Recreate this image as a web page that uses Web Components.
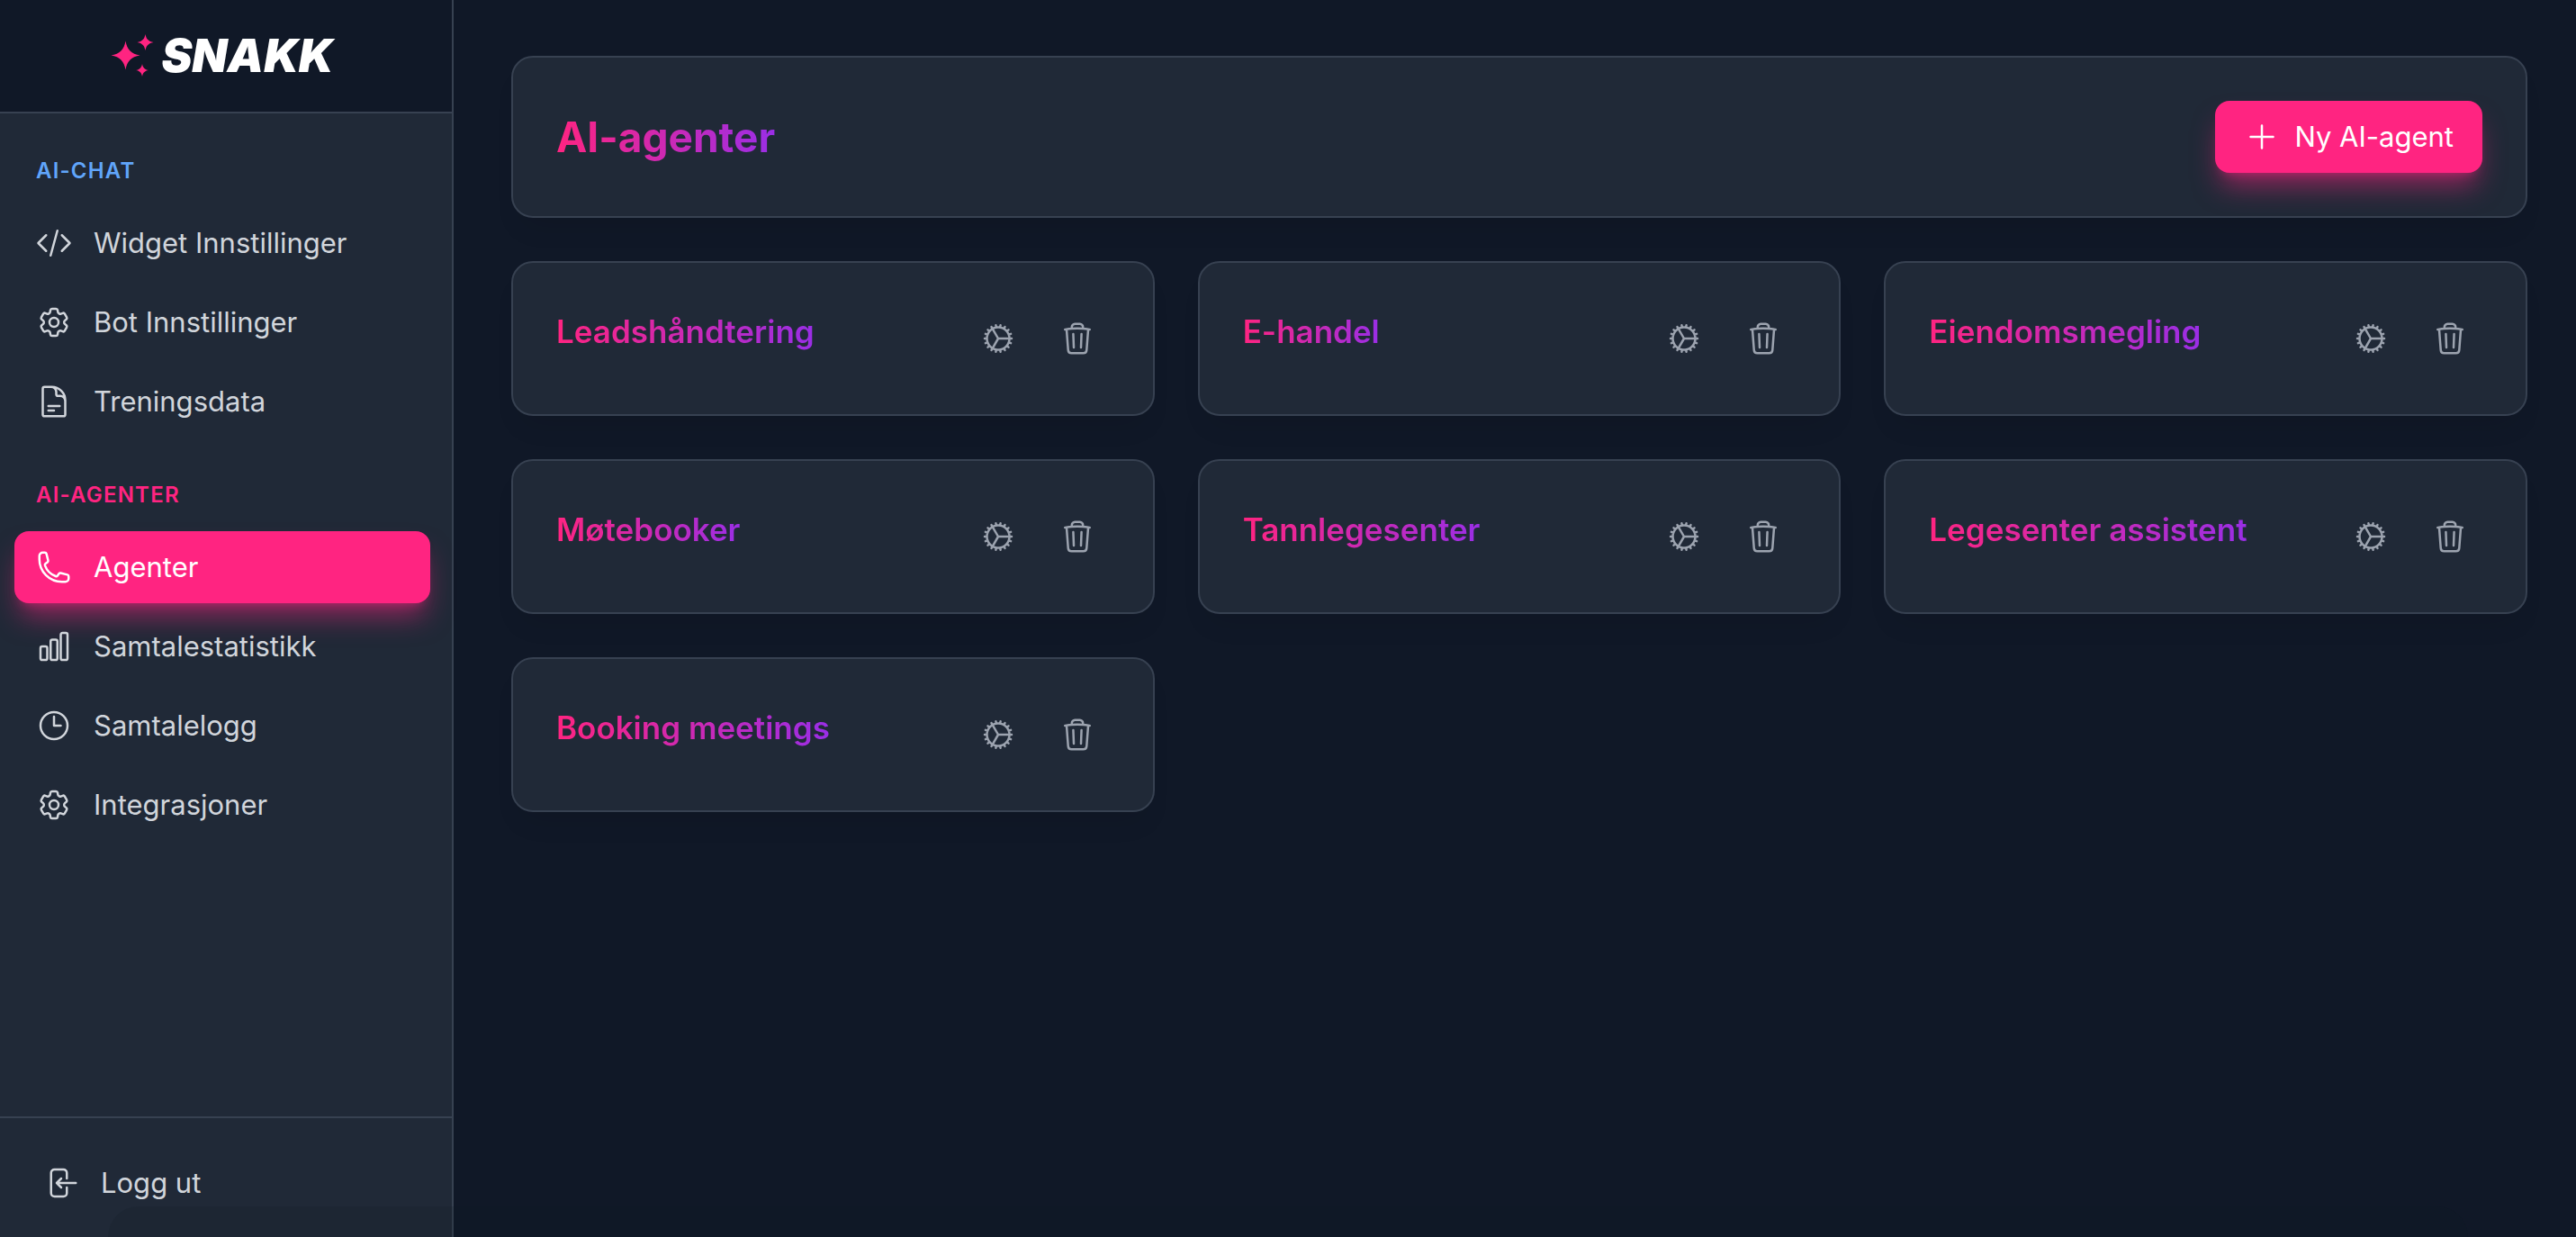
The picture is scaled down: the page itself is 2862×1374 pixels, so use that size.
<!DOCTYPE html>
<html lang="no">
<head>
<meta charset="utf-8">
<title>Snakk – AI-agenter</title>
<style>
  :root {
    --bg: #101827;
    --panel: #202937;
    --line: #374151;
    --pink: #ff2481;
    --purple: #9a2ee6;
    --blue: #60a5fa;
    --text: #d1d5db;
    --muted: #9ca3af;
    --glow: 0 20px 30px -6px rgb(255 36 129 / 0.5), 0 8px 12px -8px rgb(255 36 129 / 0.5);
    --shade: 0 20px 30px -12px rgb(0 0 0 / 0.1);
  }
  body {
    margin: 0;
    background: var(--bg);
    color: var(--text);
    font-family: Inter, "Liberation Sans", sans-serif;
    font-size: 31px;
    line-height: 48px;
  }
</style>
</head>
<body>

<app-shell>
  <side-bar slot="sidebar">
    <snakk-logo slot="logo"></snakk-logo>
    <nav-section label="AI-chat" tone="blue">
      <nav-item icon="code">Widget Innstillinger</nav-item>
      <nav-item icon="cog-tooth">Bot Innstillinger</nav-item>
      <nav-item icon="document">Treningsdata</nav-item>
    </nav-section>
    <nav-section label="AI-agenter" tone="pink">
      <nav-item icon="phone" active>Agenter</nav-item>
      <nav-item icon="chart">Samtalestatistikk</nav-item>
      <nav-item icon="clock">Samtalelogg</nav-item>
      <nav-item icon="cog-tooth">Integrasjoner</nav-item>
    </nav-section>
    <logout-button slot="footer">Logg ut</logout-button>
  </side-bar>

  <page-header>
    AI-agenter
    <primary-button slot="action" icon="plus">Ny AI-agent</primary-button>
  </page-header>

  <agent-grid>
    <agent-card>Leadshåndtering</agent-card>
    <agent-card>E-handel</agent-card>
    <agent-card>Eiendomsmegling</agent-card>
    <agent-card>Møtebooker</agent-card>
    <agent-card>Tannlegesenter</agent-card>
    <agent-card>Legesenter assistent</agent-card>
    <agent-card>Booking meetings</agent-card>
  </agent-grid>
</app-shell>

<script>
const ICONS = {
  "code": "M17.25 6.75 22.5 12l-5.25 5.25m-10.5 0L1.5 12l5.25-5.25m7.5-3-4.5 16.5",
  "cog-tooth": "M9.594 3.94c.09-.542.56-.94 1.11-.94h2.593c.55 0 1.02.398 1.11.94l.213 1.281c.063.374.313.686.645.87.074.04.147.083.22.127.325.196.72.257 1.075.124l1.217-.456a1.125 1.125 0 0 1 1.37.49l1.296 2.247a1.125 1.125 0 0 1-.26 1.431l-1.003.827c-.293.241-.438.613-.43.992a7.723 7.723 0 0 1 0 .255c-.008.378.137.75.43.991l1.004.827c.424.35.534.955.26 1.43l-1.298 2.247a1.125 1.125 0 0 1-1.369.491l-1.217-.456c-.355-.133-.75-.072-1.076.124a6.47 6.47 0 0 1-.22.128c-.331.183-.581.495-.644.869l-.213 1.281c-.09.543-.56.94-1.11.94h-2.594c-.55 0-1.019-.398-1.11-.94l-.213-1.281c-.062-.374-.312-.686-.644-.87a6.52 6.52 0 0 1-.22-.127c-.325-.196-.72-.257-1.076-.124l-1.217.456a1.125 1.125 0 0 1-1.369-.49l-1.297-2.247a1.125 1.125 0 0 1 .26-1.431l1.004-.827c.292-.24.437-.613.43-.991a6.932 6.932 0 0 1 0-.255c.007-.38-.138-.751-.43-.992l-1.004-.827a1.125 1.125 0 0 1-.26-1.43l1.297-2.247a1.125 1.125 0 0 1 1.37-.491l1.216.456c.356.133.751.072 1.076-.124.072-.044.146-.086.22-.128.332-.183.582-.495.644-.869l.214-1.28ZM15 12a3 3 0 1 1-6 0 3 3 0 0 1 6 0Z",
  "document": "M19.5 14.25v-2.625a3.375 3.375 0 0 0-3.375-3.375h-1.5A1.125 1.125 0 0 1 13.5 7.125v-1.5a3.375 3.375 0 0 0-3.375-3.375H8.25m0 12.75h7.5m-7.5 3H12M10.5 2.25H5.625c-.621 0-1.125.504-1.125 1.125v17.25c0 .621.504 1.125 1.125 1.125h12.75c.621 0 1.125-.504 1.125-1.125V11.25a9 9 0 0 0-9-9Z",
  "phone": "M2.25 6.75c0 8.284 6.716 15 15 15h2.25a2.25 2.25 0 0 0 2.25-2.25v-1.372c0-.516-.351-.966-.852-1.091l-4.423-1.106c-.44-.11-.902.055-1.173.417l-.97 1.293c-.282.376-.769.542-1.21.38a12.035 12.035 0 0 1-7.143-7.143c-.162-.441.004-.928.38-1.21l1.293-.97c.363-.271.527-.734.417-1.173L6.963 3.102a1.125 1.125 0 0 0-1.091-.852H4.5A2.25 2.25 0 0 0 2.25 4.5v2.25Z",
  "chart": "M3 13.125C3 12.504 3.504 12 4.125 12h2.25c.621 0 1.125.504 1.125 1.125v6.75C7.5 20.496 6.996 21 6.375 21h-2.25A1.125 1.125 0 0 1 3 19.875v-6.75ZM9.75 8.625c0-.621.504-1.125 1.125-1.125h2.25c.621 0 1.125.504 1.125 1.125v11.25c0 .621-.504 1.125-1.125 1.125h-2.25a1.125 1.125 0 0 1-1.125-1.125V8.625ZM16.5 4.125c0-.621.504-1.125 1.125-1.125h2.25C20.496 3 21 3.504 21 4.125v15.75c0 .621-.504 1.125-1.125 1.125h-2.25a1.125 1.125 0 0 1-1.125-1.125V4.125Z",
  "clock": "M12 6v6h4.5m4.5 0a9 9 0 1 1-18 0 9 9 0 0 1 18 0Z",
  "logout": "M15.75 9V5.25A2.25 2.25 0 0 0 13.5 3h-6a2.25 2.25 0 0 0-2.25 2.25v13.5A2.25 2.25 0 0 0 7.5 21h6a2.25 2.25 0 0 0 2.25-2.25V15M12 9l-3 3m0 0 3 3m-3-3h12.75",
  "plus": "M12 4.5v15m7.5-7.5h-15",
  "cog": "M4.5 12a7.5 7.5 0 0 0 15 0m-15 0a7.5 7.5 0 1 1 15 0m-15 0H3m16.5 0H21m-1.5 0H12m-8.457 3.077 1.41-.513m14.095-5.13 1.41-.513M5.106 17.785l1.15-.964m11.49-9.642 1.149-.964M7.501 19.795l.75-1.3m7.5-12.99.75-1.3m-6.063 16.658.26-1.477m2.605-14.772.26-1.477m0 17.726-.26-1.477M10.698 4.614l-.26-1.477M16.5 19.794l-.75-1.299M7.5 4.205 12 12m6.894 5.785-1.149-.964M6.256 7.178l-1.15-.964m15.352 8.864-1.41-.513M4.954 9.435l-1.41-.514M12.002 12l-3.75 6.495",
  "trash": "m14.74 9-.346 9m-4.788 0L9.26 9m9.968-3.21c.342.052.682.107 1.022.166m-1.022-.165L18.16 19.673a2.25 2.25 0 0 1-2.244 2.077H8.084a2.25 2.25 0 0 1-2.244-2.077L4.772 5.79m14.456 0a48.108 48.108 0 0 0-3.478-.397m-12 .562c.34-.059.68-.114 1.022-.165m0 0a48.11 48.11 0 0 1 3.478-.397m7.5 0v-.916c0-1.18-.91-2.164-2.09-2.201a51.964 51.964 0 0 0-3.32 0c-1.18.037-2.09 1.022-2.09 2.201v.916m7.5 0a48.667 48.667 0 0 0-7.5 0"
};

/**
 * Shared base: opens the shadow root and renders the subclass template
 */
class BaseElement extends HTMLElement {
  constructor() {
    super();
    this.attachShadow({ mode: "open" });
  }

  connectedCallback() {
    this.shadowRoot.innerHTML = this.template();
  }
}

/**
 * Outline icon, <app-icon name="trash">
 */
class AppIcon extends BaseElement {
  template() {
    return `
      <style>
        :host { display: block; flex: none; width: 40px; height: 40px; }
        svg { display: block; width: 100%; height: 100%; }
      </style>
      <svg viewBox="0 0 24 24" fill="none" stroke="currentColor" stroke-width="1.5"
           stroke-linecap="round" stroke-linejoin="round" aria-hidden="true">
        <path d="${ICONS[this.getAttribute("name")]}"/>
      </svg>
    `;
  }
}

/**
 * Page frame with a sidebar column and a main column
 */
class AppShell extends BaseElement {
  template() {
    return `
      <style>
        :host { display: flex; min-height: 100vh; }
        main {
          flex: 1;
          min-width: 0;
          display: flex;
          flex-direction: column;
          gap: 48px;
          padding: 62px 54px 62px 64px;
        }
        /* faint shade along the bottom edge of the window */
        .edge {
          position: fixed;
          left: 120px;
          right: 120px;
          bottom: 0;
          height: 34px;
          border-radius: 80px 80px 0 0;
          background: rgb(16 24 32 / 0.15);
          pointer-events: none;
        }
      </style>
      <slot name="sidebar"></slot>
      <main><slot></slot></main>
      <div class="edge"></div>
    `;
  }
}

class SideBar extends BaseElement {
  template() {
    return `
      <style>
        :host {
          box-sizing: border-box;
          display: flex;
          flex-direction: column;
          flex: none;
          width: 504px;
          background: var(--panel);
          border-right: 2px solid var(--line);
        }
        header {
          display: flex;
          justify-content: center;
          padding: 30px 24px 30px 16px;
          background: var(--bg);
          border-bottom: 2px solid var(--line);
        }
        nav {
          flex: 1;
          display: flex;
          flex-direction: column;
          gap: 48px;
          padding: 48px 24px 48px 16px;
        }
        footer {
          padding: 32px 24px 20px;
          border-top: 2px solid var(--line);
        }
      </style>
      <header><slot name="logo"></slot></header>
      <nav><slot></slot></nav>
      <footer><slot name="footer"></slot></footer>
    `;
  }
}

class SnakkLogo extends BaseElement {
  template() {
    return `
      <style>
        :host {
          display: flex;
          align-items: center;
          gap: 8px;
          height: 64px;
          color: #fff;
          font-size: 51px;
          font-weight: 900;
          font-style: italic;
          line-height: 64px;
        }
        svg { display: block; width: 48px; height: 48px; fill: var(--pink); }
      </style>
      <svg viewBox="0 0 48 48" aria-hidden="true">
        <path d="M16.500 7.500C18 17 23 22 32.500 23.500C23 25 18 30 16.500 39.500C15 30 10 25 .5 23.500C10 22 15 17 16.500 7.500Z"/>
        <path d="M38.500 0C39.400 5.300 42 8 47.500 9C42 10 39.400 12.700 38.500 18C37.600 12.700 35 10 29.500 9C35 8 37.600 5.300 38.500 0Z"/>
        <path d="M35 33C35.700 37.200 37.800 39.300 42 40C37.800 40.700 35.700 42.800 35 47C34.300 42.800 32.200 40.700 28 40C32.200 39.300 34.300 37.200 35 33Z"/>
      </svg>
      <span>SNAKK</span>
    `;
  }
}

/**
 * Group of links below a small capital heading
 */
class NavSection extends BaseElement {
  template() {
    const tone = this.getAttribute("tone");
    return `
      <style>
        :host { display: flex; flex-direction: column; gap: 24px; }
        h2 {
          margin: 0;
          padding-left: 24px;
          color: var(--${tone});
          font-size: 24px;
          font-weight: 600;
          line-height: 32px;
          letter-spacing: 0.05em;
          text-transform: uppercase;
        }
        .items { display: flex; flex-direction: column; gap: 8px; }
      </style>
      <h2>${this.getAttribute("label")}</h2>
      <div class="items"><slot></slot></div>
    `;
  }
}

class NavItem extends BaseElement {
  template() {
    return `
      <style>
        :host { display: block; }
        a {
          display: flex;
          align-items: center;
          gap: 24px;
          padding: 16px 24px;
          border-radius: 16px;
          color: var(--text);
          text-decoration: none;
        }
        :host([active]) a {
          background: var(--pink);
          color: #fff;
          box-shadow: var(--glow);
        }
      </style>
      <a href="#">
        <app-icon name="${this.getAttribute("icon")}"></app-icon>
        <span><slot></slot></span>
      </a>
    `;
  }
}

class LogoutButton extends BaseElement {
  template() {
    return `
      <style>
        :host { display: block; }
        button {
          display: flex;
          align-items: center;
          gap: 24px;
          width: 100%;
          padding: 16px 24px;
          border: 0;
          background: none;
          color: var(--text);
          font: inherit;
          cursor: pointer;
        }
      </style>
      <button type="button">
        <app-icon name="logout"></app-icon>
        <span><slot></slot></span>
      </button>
    `;
  }
}

class PageHeader extends BaseElement {
  template() {
    return `
      <style>
        :host {
          display: flex;
          align-items: center;
          justify-content: space-between;
          padding: 48px;
          background: var(--panel);
          border: 2px solid var(--line);
          border-radius: 24px;
          box-shadow: var(--shade);
        }
        h1 {
          margin: 0;
          background: linear-gradient(to right, var(--pink), var(--purple));
          -webkit-background-clip: text;
          background-clip: text;
          color: transparent;
          font-size: 46px;
          font-weight: 700;
          line-height: 64px;
        }
      </style>
      <h1><slot></slot></h1>
      <slot name="action"></slot>
    `;
  }
}

class PrimaryButton extends BaseElement {
  template() {
    return `
      <style>
        :host { display: block; }
        button {
          display: flex;
          align-items: center;
          gap: 16px;
          padding: 16px 32px;
          border: 0;
          border-radius: 16px;
          background: var(--pink);
          color: #fff;
          font: inherit;
          cursor: pointer;
          box-shadow: var(--glow);
        }
      </style>
      <button type="button">
        <app-icon name="${this.getAttribute("icon")}"></app-icon>
        <span><slot></slot></span>
      </button>
    `;
  }
}

class AgentGrid extends BaseElement {
  template() {
    return `
      <style>
        :host {
          display: grid;
          grid-template-columns: repeat(3, minmax(0, 1fr));
          gap: 48px;
        }
      </style>
      <slot></slot>
    `;
  }
}

/**
 * One agent with its settings and delete buttons
 */
class AgentCard extends BaseElement {
  template() {
    return `
      <style>
        :host {
          display: flex;
          align-items: flex-start;
          justify-content: space-between;
          padding: 48px;
          background: var(--panel);
          border: 2px solid var(--line);
          border-radius: 24px;
          box-shadow: var(--shade);
        }
        h3 {
          margin: 0;
          background: linear-gradient(to right, var(--pink), var(--purple));
          -webkit-background-clip: text;
          background-clip: text;
          color: transparent;
          font-size: 35px;
          font-weight: 600;
          line-height: 56px;
        }
        .actions { display: flex; gap: 16px; }
        button {
          padding: 16px;
          border: 0;
          background: none;
          color: var(--muted);
          cursor: pointer;
        }
      </style>
      <h3><slot></slot></h3>
      <div class="actions">
        <button type="button" aria-label="Innstillinger"><app-icon name="cog"></app-icon></button>
        <button type="button" aria-label="Slett"><app-icon name="trash"></app-icon></button>
      </div>
    `;
  }
}

customElements.define("app-icon", AppIcon);
customElements.define("app-shell", AppShell);
customElements.define("side-bar", SideBar);
customElements.define("snakk-logo", SnakkLogo);
customElements.define("nav-section", NavSection);
customElements.define("nav-item", NavItem);
customElements.define("logout-button", LogoutButton);
customElements.define("page-header", PageHeader);
customElements.define("primary-button", PrimaryButton);
customElements.define("agent-grid", AgentGrid);
customElements.define("agent-card", AgentCard);
</script>
</body>
</html>
